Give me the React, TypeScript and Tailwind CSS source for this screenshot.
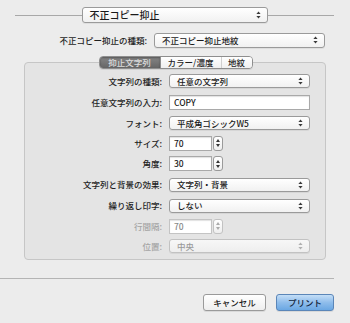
import clsx from "clsx";
import type { ReactNode } from "react";

function Arrows({ dim }: { dim?: boolean }) {
  return (
    <svg
      width="5"
      height="8"
      viewBox="0 0 5 8"
      className={dim ? "fill-[#b0b0b0]" : "fill-[#3a3a3a]"}
    >
      <path d="M2.5 0.5 L4.6 3 H0.4 Z" />
      <path d="M0.4 5 H4.6 L2.5 7.5 Z" />
    </svg>
  );
}

function Popup({
  value,
  className,
  dim,
}: {
  value: string;
  className?: string;
  dim?: boolean;
}) {
  return (
    <div
      className={clsx(
        "flex items-center justify-between rounded-[3px] border pl-[7px] pr-[6px] shadow-[0_1px_0_rgba(0,0,0,0.06)]",
        dim
          ? "border-[#c2c2c2] bg-linear-to-b from-[#f7f7f7] to-[#eeeeee] text-[#9a9a9a]"
          : "border-[#9a9a9a] bg-linear-to-b from-white to-[#f1f1f1] text-[#1a1a1a]",
        className
      )}
    >
      <span className="leading-none">{value}</span>
      <Arrows dim={dim} />
    </div>
  );
}

function Field({
  value,
  className,
  dim,
}: {
  value: string;
  className?: string;
  dim?: boolean;
}) {
  return (
    <div
      className={clsx(
        "flex items-center border bg-white pl-[4px] shadow-[inset_0_1px_1px_rgba(0,0,0,0.12)]",
        dim ? "border-[#c4c4c4] text-[#8a8a8a]" : "border-[#a9a9a9] text-[#1a1a1a]",
        className
      )}
    >
      <span className="leading-none">{value}</span>
    </div>
  );
}

function Stepper({ dim }: { dim?: boolean }) {
  return (
    <div
      className={clsx(
        "ml-[1px] flex h-[15px] w-[10px] flex-col items-center justify-center gap-[2px] rounded-[3px] border bg-linear-to-b from-white to-[#eeeeee]",
        dim ? "border-[#c2c2c2]" : "border-[#9a9a9a]"
      )}
    >
      <svg width="4" height="3" viewBox="0 0 4 3" className={dim ? "fill-[#aaa]" : "fill-[#333]"}>
        <path d="M2 0 L4 3 H0 Z" />
      </svg>
      <svg width="4" height="3" viewBox="0 0 4 3" className={dim ? "fill-[#aaa]" : "fill-[#333]"}>
        <path d="M0 0 H4 L2 3 Z" />
      </svg>
    </div>
  );
}

function Row({
  label,
  h,
  dim,
  children,
}: {
  label: string;
  h: string;
  dim?: boolean;
  children: ReactNode;
}) {
  return (
    <div className={clsx("flex items-center", h)}>
      <div
        className={clsx(
          "w-[137px] text-right leading-none",
          dim ? "text-[#a5a5a5]" : "text-[#1e1e1e]"
        )}
      >
        {label}
      </div>
      <div className="ml-[7px] flex items-center">{children}</div>
    </div>
  );
}

export default function App() {
  return (
    <div className="flex h-[323px] w-[350px] flex-col overflow-hidden bg-[#ececec] font-['Noto_Sans_CJK_JP','Noto_Sans',sans-serif] text-[8.5px] font-medium text-[#1e1e1e]">
      {/* top popup with lines */}
      <div className="mt-[7px] flex items-center pl-[15px] pr-[16px]">
        <div className="h-px flex-1 bg-[#a8a8a8]" />
        <Popup value="不正コピー抑止" className="h-[16px] w-[186px] text-[10px]" />
        <div className="h-px flex-1 bg-[#a8a8a8]" />
      </div>

      <div className="mt-[9px] flex h-[16px] items-center">
        <div className="w-[147px] text-right leading-none">不正コピー抑止の種類:</div>
        <Popup value="不正コピー抑止地紋" className="ml-[7px] h-[15px] w-[171px]" />
      </div>

      {/* group box */}
      <div className="ml-[24px] mt-[14px] flex h-[198px] w-[302px] flex-col rounded-[4px] border border-[#c6c6c6] bg-[#e4e4e4]">
        <div className="-mt-[7px] flex justify-center pl-[1px]">
          <div className="flex h-[13px] overflow-hidden rounded-[4px] border border-[#8e8e8e] shadow-[0_1px_0_rgba(0,0,0,0.08)]">
            <div className="flex w-[60px] items-center justify-center bg-linear-to-b from-[#858585] to-[#666666] leading-none text-[#dcdcdc] shadow-[inset_0_1px_2px_rgba(0,0,0,0.35)]">
              抑止文字列
            </div>
            <div className="flex w-[61px] items-center justify-center border-l border-[#8e8e8e] bg-linear-to-b from-white to-[#f0f0f0] leading-none">
              カラー/濃度
            </div>
            <div className="flex w-[31px] items-center justify-center border-l border-[#d0d0d0] bg-linear-to-b from-white to-[#f0f0f0] leading-none">
              地紋
            </div>
          </div>
        </div>

        <div className="mt-[1px] flex flex-col">
          <Row label="文字列の種類:" h="h-[22px]">
            <Popup value="任意の文字列" className="h-[14px] w-[141px]" />
          </Row>
          <Row label="任意文字列の入力:" h="h-[21px]">
            <Field value="COPY" className="h-[15px] w-[141px]" />
          </Row>
          <Row label="フォント:" h="h-[20px]">
            <Popup value="平成角ゴシックW5" className="h-[14px] w-[141px]" />
          </Row>
          <Row label="サイズ:" h="h-[20px]">
            <Field value="70" className="h-[15px] w-[43px]" />
            <Stepper />
          </Row>
          <Row label="角度:" h="h-[21px]">
            <Field value="30" className="h-[15px] w-[43px]" />
            <Stepper />
          </Row>
          <Row label="文字列と背景の効果:" h="h-[21px]">
            <Popup value="文字列・背景" className="h-[14px] w-[141px]" />
          </Row>
          <Row label="繰り返し印字:" h="h-[21px]">
            <Popup value="しない" className="h-[14px] w-[141px]" />
          </Row>
          <Row label="行間隔:" h="h-[20px]" dim>
            <Field value="70" className="h-[15px] w-[43px]" dim />
            <Stepper dim />
          </Row>
          <Row label="位置:" h="h-[20px]" dim>
            <Popup value="中央" className="h-[14px] w-[141px]" dim />
          </Row>
        </div>
      </div>

      {/* separator */}
      <div className="mt-[18px] mr-[16px] h-px bg-[#b4b4b4]" />

      {/* buttons */}
      <div className="mt-[15px] flex justify-end gap-[10px] pr-[16px]">
        <button className="flex h-[17px] w-[63px] items-center justify-center rounded-[3px] border border-[#9a9a9a] bg-linear-to-b from-white to-[#eeeeee] leading-none text-[#1a1a1a] shadow-[0_1px_0_rgba(0,0,0,0.08)]">
          キャンセル
        </button>
        <button className="flex h-[17px] w-[58px] items-center justify-center rounded-[3px] border border-[#5b86b8] bg-linear-to-b from-[#c4def7] via-[#8fbdeb] to-[#6aa7e3] leading-none text-[#10233a] shadow-[0_1px_0_rgba(0,0,0,0.08)]">
          プリント
        </button>
      </div>
    </div>
  );
}
